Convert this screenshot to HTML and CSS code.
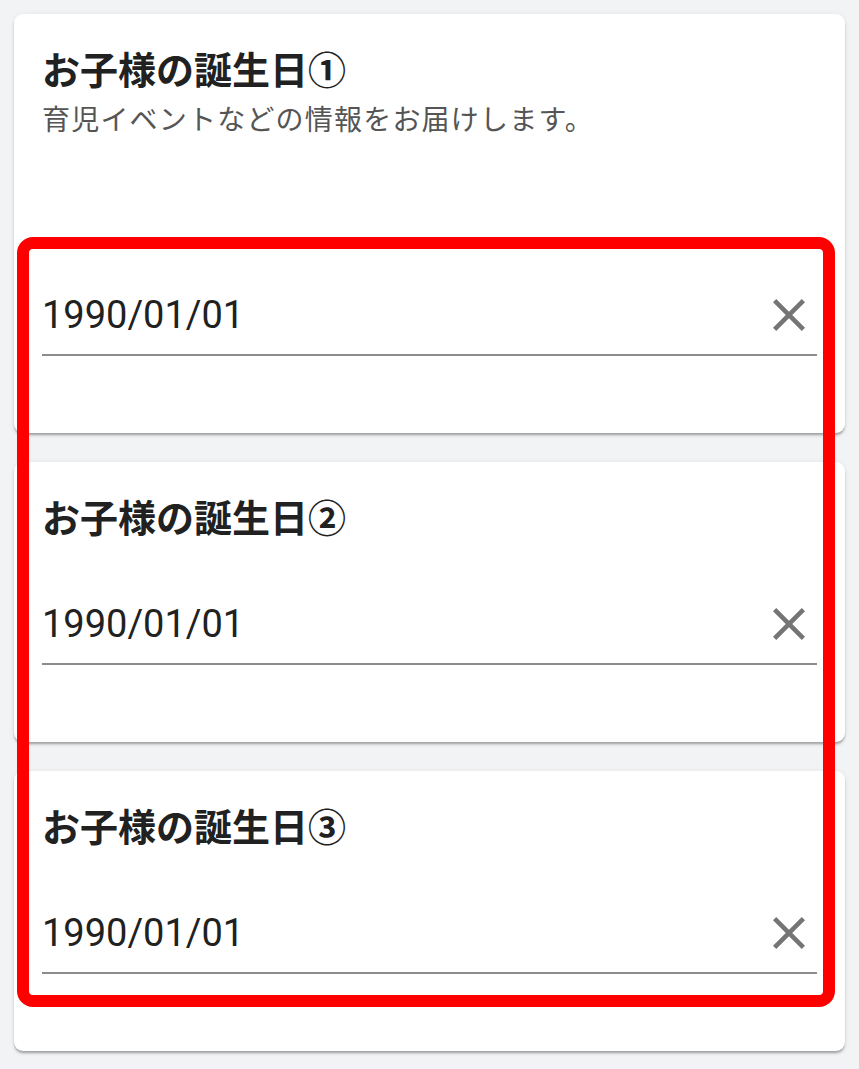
FILE: index.html
```html
<!DOCTYPE html>
<html lang="ja">
<head>
<meta charset="utf-8">
<title>お子様の誕生日</title>
<link rel="stylesheet" href="styles.css">
</head>
<body>
<main class="list">
  <section class="card">
    <h2 class="card-title">お子様の誕生日①</h2>
    <p class="card-desc">育児イベントなどの情報をお届けします。</p>
    <div class="field field-first">
      <span class="field-value">1990/01/01</span>
      <svg class="clear-icon" viewBox="5 5 14 14" aria-hidden="true"><path d="M19 6.41L17.59 5 12 10.59 6.41 5 5 6.41 10.59 12 5 17.59 6.41 19 12 13.41 17.59 19 19 17.59 13.41 12z"/></svg>
    </div>
  </section>
  <section class="card">
    <h2 class="card-title">お子様の誕生日②</h2>
    <div class="field">
      <span class="field-value">1990/01/01</span>
      <svg class="clear-icon" viewBox="5 5 14 14" aria-hidden="true"><path d="M19 6.41L17.59 5 12 10.59 6.41 5 5 6.41 10.59 12 5 17.59 6.41 19 12 13.41 17.59 19 19 17.59 13.41 12z"/></svg>
    </div>
  </section>
  <section class="card">
    <h2 class="card-title">お子様の誕生日③</h2>
    <div class="field">
      <span class="field-value">1990/01/01</span>
      <svg class="clear-icon" viewBox="5 5 14 14" aria-hidden="true"><path d="M19 6.41L17.59 5 12 10.59 6.41 5 5 6.41 10.59 12 5 17.59 6.41 19 12 13.41 17.59 19 19 17.59 13.41 12z"/></svg>
    </div>
  </section>
</main>
<div class="highlight"></div>
</body>
</html>
```
FILE: styles.css
```css
html, body {
  margin: 0;
  padding: 0;
}
body {
  background: #f2f3f5;
  font-family: Roboto, "Noto Sans CJK JP", sans-serif;
  color: #212121;
  position: relative;
  min-height: 1069px;
}
.list {
  display: flex;
  flex-direction: column;
  gap: 29px;
  padding: 14px 14px 0 14px;
}
.card {
  background: #ffffff;
  border-radius: 9px;
  padding: 32px 28px 77px 28px;
  box-shadow: 0 3px 3px -1px rgba(0,0,0,0.22), 0 2px 2px rgba(0,0,0,0.12), 0 1px 6px rgba(0,0,0,0.07);
}
.card-title {
  margin: 0;
  font-family: "Noto Sans CJK JP", sans-serif;
  font-size: 38px;
  line-height: 44px;
  font-weight: 700;
  color: #212121;
}
.card-desc {
  margin: 8px 0 0 0;
  font-family: "Noto Sans CJK JP", sans-serif;
  font-size: 28px;
  line-height: 40px;
  font-weight: 400;
  letter-spacing: 1.2px;
  color: #555555;
}
.field {
  margin-top: 62px;
  display: flex;
  align-items: center;
  height: 48px;
  padding-bottom: 15px;
  border-bottom: 2px solid #8c8c8c;
}
.field-first {
  margin-top: 153px;
}
.field-value {
  flex: 1;
  font-family: Roboto, sans-serif;
  font-size: 38px;
  line-height: 48px;
  color: #212121;
}
.clear-icon {
  width: 32px;
  height: 32px;
  margin-right: 12px;
  fill: #757575;
}
.highlight {
  position: absolute;
  left: 17px;
  top: 237px;
  width: 794px;
  height: 746px;
  border: 12px solid #ff0000;
  border-radius: 16px;
  pointer-events: none;
}
```
